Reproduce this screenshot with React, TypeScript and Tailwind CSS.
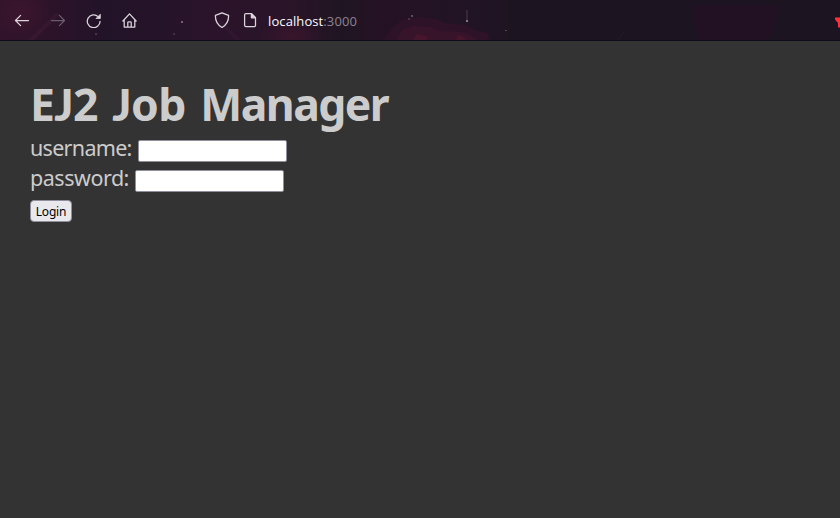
import React from "react";

function ToolbarArt() {
  return (
    <svg className="absolute inset-0 h-full w-full" viewBox="0 0 840 40" preserveAspectRatio="none" aria-hidden="true">
      <defs>
        <linearGradient id="base" x1="0" x2="1" y1="0" y2="0">
          <stop offset="0" stopColor="#31142b" />
          <stop offset="0.06" stopColor="#2c132a" />
          <stop offset="0.12" stopColor="#231328" />
          <stop offset="0.19" stopColor="#241329" />
          <stop offset="0.25" stopColor="#2b142b" />
          <stop offset="0.35" stopColor="#291428" />
          <stop offset="0.41" stopColor="#1f1522" />
          <stop offset="0.45" stopColor="#251224" />
          <stop offset="0.58" stopColor="#201424" />
          <stop offset="0.61" stopColor="#1d1421" />
          <stop offset="1" stopColor="#1d1421" />
        </linearGradient>
        <radialGradient id="glow">
          <stop offset="0" stopColor="#4c1730" stopOpacity="0.45" />
          <stop offset="1" stopColor="#4c1730" stopOpacity="0" />
        </radialGradient>
      </defs>
      <rect width="840" height="40" fill="url(#base)" />
      <ellipse cx="22" cy="12" rx="30" ry="28" fill="url(#glow)" />
      <ellipse cx="292" cy="36" rx="34" ry="16" fill="url(#glow)" />
      <path d="M28 40 L56 13 L60 14 L34 40Z" fill="#451d38" opacity="0.4" />
      <path d="M220 19 L241 40 H235 L218 22Z" fill="#3b1a36" opacity="0.4" />
      <path d="M384 40 L393 27 L405 19 L420 17 L436 19 L445 23 L465 25 L474 30 L488 33 L489 40Z" fill="#2e1328" />
      <path d="M397 40 L402 30 L414 26 L430 27 L438 31 L462 32 L475 38 L478 40Z" fill="#38142b" />
      <path d="M413 40 L417 34 L426 36 L428 40Z M456 40 L458 35 L464 37 L466 40Z" fill="#47162c" />
      <path d="M692 5 H778 L775 23 L767 40 H700 L694 24Z" fill="#221123" />
      <g fill="#8e7188">
        <rect x="181" y="21" width="2" height="2" opacity="0.8" />
        <rect x="173" y="33" width="2" height="2" opacity="0.3" />
        <rect x="95" y="33" width="2" height="2" opacity="0.35" />
        <rect x="411" y="15" width="2" height="2" opacity="0.6" />
        <rect x="408" y="18" width="2" height="2" opacity="0.3" />
        <rect x="466" y="20" width="2" height="2" />
        <rect x="466" y="10" width="2" height="10" opacity="0.2" />
        <rect x="505" y="30" width="2" height="1" opacity="0.5" />
      </g>
      <path d="M617 40 L624 32" stroke="#30202f" opacity="0.6" />
    </svg>
  );
}

function NavIcon({ children, className }: { children: React.ReactNode; className: string }) {
  return (
    <svg width="16" height="16" viewBox="0 0 16 16" fill="none" strokeWidth="1.25" strokeLinecap="round" strokeLinejoin="round" className={className}>
      {children}
    </svg>
  );
}

function BrowserBar() {
  return (
    <header className="relative h-[41px] overflow-hidden border-b border-[#100b18] bg-[#1d1421]">
      <ToolbarArt />
      <div className="relative flex h-10 items-center pl-[14px]">
        <NavIcon className="stroke-[#dcd5dc]">
          <path d="M14.5 8.5H1.7M6.6 3.4L1.5 8.5L6.6 13.6" />
        </NavIcon>
        <NavIcon className="ml-5 stroke-[#6b5b70]">
          <path d="M1.5 8.5H14.3M9.4 3.4L14.5 8.5L9.4 13.6" />
        </NavIcon>
        <NavIcon className="ml-5 stroke-[#dcd5dc]">
          <path d="M14.1 9.3A6.4 6.4 0 1 1 12.1 4.6" />
          <path d="M14.3 2.6V6.5H10.4Z" fill="#dcd5dc" strokeWidth="0.8" />
        </NavIcon>
        <NavIcon className="ml-5 stroke-[#dcd5dc]">
          <path d="M0.9 9L7.5 1.8L14.1 9M2.2 8V15.1H12.8V8M5.8 15V10.6Q5.8 9.8 6.6 9.8H8.4Q9.2 9.8 9.2 10.6V15" />
        </NavIcon>
        <NavIcon className="ml-[76px] stroke-[#dcd5dc]">
          <path d="M8 0.8L14.6 3.4Q14.9 11.8 8 15.5Q1.1 11.8 1.4 3.4Z" />
        </NavIcon>
        <NavIcon className="ml-3 stroke-[#dcd5dc]">
          <path d="M4 1.7H9.5L13.5 5.7V13.5Q13.5 14.6 12.4 14.6H4Q2.6 14.6 2.6 13.2V3.1Q2.6 1.7 4 1.7Z" />
          <path d="M9.4 1.8V5.8H13.4Z" fill="#dcd5dc" />
        </NavIcon>
        <span className="ml-[10px] mt-[2px] whitespace-nowrap font-['Open_Sans',sans-serif] text-[13px] leading-5 tracking-[0.1px] text-[#fbfbfe]">
          localhost<span className="text-[#8d8290]">:3000</span>
        </span>
      </div>
      <svg className="absolute right-0 top-[17px]" width="5" height="11" viewBox="0 0 5 11" aria-hidden="true">
        <path d="M0 0.5H5V10.5H3V6L0 2.5Z" fill="#ff2f38" />
      </svg>
    </header>
  );
}

function Field({ label, type, labelClass }: { label: string; type: string; labelClass: string }) {
  return (
    <label className="flex h-[30px] items-start">
      <span className={labelClass}>{label}</span>
      <input type={type} className="mt-2 h-[22px] w-[149px] rounded-[2px] border border-[#8f8f9d] bg-white px-1 text-[13px] text-black outline-none" />
    </label>
  );
}

export default function App() {
  return (
    <div className="flex h-[518px] w-[840px] flex-col overflow-hidden bg-[#333333]">
      <BrowserBar />
      <main className="flex flex-1 flex-col items-start pl-[30px] pt-8 font-['Noto_Sans',sans-serif] text-[#cccccc]">
        <h1 className="h-[59px] whitespace-nowrap pt-px text-[44.5px] font-bold leading-[60px] tracking-[-1.55px] [word-spacing:4.5px]">
          <span className="tracking-[-0.6px]">E<span className="font-['Lato',sans-serif] font-black">J</span>2</span> <span className="tracking-[-0.6px]"><span className="font-['Lato',sans-serif] font-black">J</span>ob</span> Manager
        </h1>
        <form className="flex flex-col items-start" onSubmit={(event) => event.preventDefault()}>
          <Field label="username:" type="text" labelClass="w-[108px] whitespace-nowrap pt-px text-[21.5px] leading-[30px] tracking-[-0.7px]" />
          <Field label="password:" type="password" labelClass="w-[105px] whitespace-nowrap pt-px text-[21.5px] leading-[30px] tracking-[-0.48px]" />
          <button type="submit" className="mt-2 flex h-[22px] w-[42px] items-center justify-center rounded-[4px] border border-[#8f8f9d] bg-[#e9e9ed] pt-[2px] text-[12px] leading-4 tracking-[-0.2px] text-black">
            Login
          </button>
        </form>
      </main>
    </div>
  );
}
